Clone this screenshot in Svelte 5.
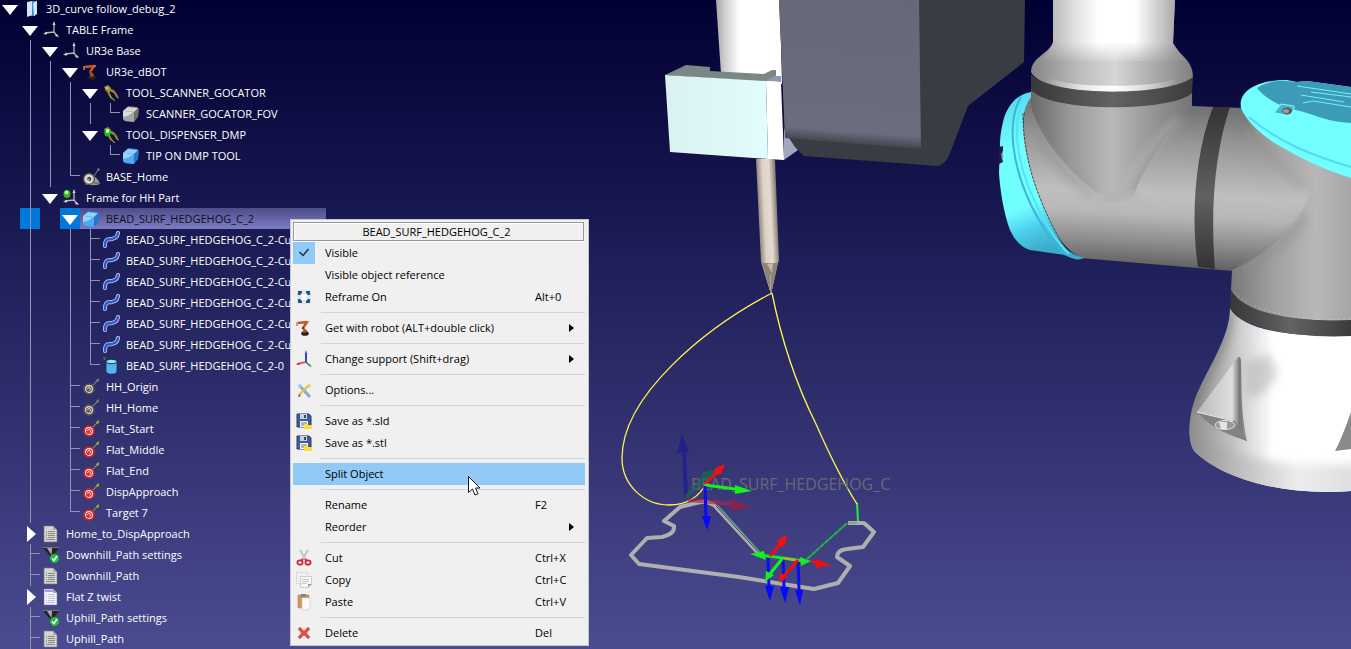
<script>
  // Each character of `cells` fills one 20px guide column:
  // "|" line, "T" branch, "L" last branch, "v" open node, ">" closed node.
  const curve = { cells: ' | |T', icon: 'curve', text: 'BEAD_SURF_HEDGEHOG_C_2-Curve' };
  let rows = [
    { cells: 'v', icon: 'station', text: '3D_curve follow_debug_2' },
    { cells: ' v', icon: 'frame', text: 'TABLE Frame' },
    { cells: ' |v', icon: 'frame', text: 'UR3e Base' },
    { cells: ' ||v', icon: 'robot', text: 'UR3e_dBOT' },
    { cells: ' |||v', icon: 'tool', text: 'TOOL_SCANNER_GOCATOR' },
    { cells: ' ||||L', icon: 'graycube', text: 'SCANNER_GOCATOR_FOV' },
    { cells: ' |||v', icon: 'activetool', text: 'TOOL_DISPENSER_DMP' },
    { cells: ' ||| L', icon: 'cube', text: 'TIP ON DMP TOOL' },
    { cells: ' ||L', icon: 'snail', text: 'BASE_Home' },
    { cells: ' |v', icon: 'activeframe', text: 'Frame for HH Part' },
    { cells: ' | v', icon: 'cube', text: 'BEAD_SURF_HEDGEHOG_C_2', selected: true },
    curve, curve, curve, curve, curve, curve,
    { cells: ' | |L', icon: 'cylinder', text: 'BEAD_SURF_HEDGEHOG_C_2-0' },
    { cells: ' | T', icon: 'graytarget', text: 'HH_Origin' },
    { cells: ' | T', icon: 'graytarget', text: 'HH_Home' },
    { cells: ' | T', icon: 'target', text: 'Flat_Start' },
    { cells: ' | T', icon: 'target', text: 'Flat_Middle' },
    { cells: ' | T', icon: 'target', text: 'Flat_End' },
    { cells: ' | T', icon: 'target', text: 'DispApproach' },
    { cells: ' | L', icon: 'target', text: 'Target 7' },
    { cells: ' >', icon: 'program', text: 'Home_to_DispApproach' },
    { cells: ' T', icon: 'settings', text: 'Downhill_Path settings' },
    { cells: ' T', icon: 'program', text: 'Downhill_Path' },
    { cells: ' >', icon: 'script', text: 'Flat Z twist' },
    { cells: ' T', icon: 'settings', text: 'Uphill_Path settings' },
    { cells: ' T', icon: 'program', text: 'Uphill_Path' }
  ];

  let menu = [
    { text: 'Visible', icon: 'check', checked: true },
    { text: 'Visible object reference' },
    { text: 'Reframe On', icon: 'reframe', key: 'Alt+0' },
    null,
    { text: 'Get with robot (ALT+double click)', icon: 'robot', sub: true },
    null,
    { text: 'Change support (Shift+drag)', icon: 'axes', sub: true },
    null,
    { text: 'Options...', icon: 'options' },
    null,
    { text: 'Save as *.sld', icon: 'save' },
    { text: 'Save as *.stl', icon: 'save' },
    null,
    { text: 'Split Object', active: true },
    null,
    { text: 'Rename', key: 'F2' },
    { text: 'Reorder', sub: true },
    null,
    { text: 'Cut', icon: 'cut', key: 'Ctrl+X' },
    { text: 'Copy', icon: 'copy', key: 'Ctrl+C' },
    { text: 'Paste', icon: 'paste', key: 'Ctrl+V' },
    null,
    { text: 'Delete', icon: 'delete', key: 'Del' }
  ];
</script>

{#snippet icon(name)}
  <svg class="icon" viewBox="0 0 18 18" width="18" height="18" aria-hidden="true">
    {#if name === 'station'}
      <path d="M5 3h8v13H5z" fill="#3f8fd8" /><path d="M5 2l5-1v14l-5 2z" fill="#d3e6f5" />
      <path d="M10 1h5v13l-5 2z" fill="#3d8ad5" /><path d="M11 3l4-2v13l-3 2z" fill="#cfe8fb" />
    {:else if name === 'frame' || name === 'activeframe'}
      <g stroke="#b9b9b0" stroke-width="1.3" fill="none"><path d="M12 11V3M12 11l-9 1M12 11l3 4" /></g>
      <path d="M12 0l1.500 4h-3zM1 13l4-2.500v3zM17 16l-4-1 2-2z" fill="#d5d5cc" />
      {#if name === 'activeframe'}<ellipse cx="5" cy="5" rx="3.500" ry="4" fill="#35b516" /><circle cx="4.500" cy="3.500" r="2" fill="#b6f79e" />{/if}
    {:else if name === 'robot'}
      <path d="M3 4l9-1-4 6 3 4" fill="none" stroke="#c4572a" stroke-width="2.500" stroke-linejoin="round" />
      <path d="M2 3v4M13 2v2" stroke="#d8804d" stroke-width="1.500" />
      <ellipse cx="10" cy="14.500" rx="3.800" ry="2.300" fill="#29201f" /><path d="M8 13l4-1" stroke="#a7441e" stroke-width="2" />
      <circle cx="8" cy="9" r="1" fill="#60301e" />
    {:else if name === 'tool' || name === 'activetool'}
      <path d="M3 5l4-1 5 2 3 4 2 5-3-2-2-4-4-2-1 1 2 4 4 5-5-3-3-6z" fill="#8a7b20" stroke="#4d4614" stroke-width=".5" />
      <path d="M8 6l5 3 3 5M6 7l3 6 4 4" fill="none" stroke="#ada23c" stroke-width="1" />
      <path d="M2 3l4-2 3 3-1 4-4-1z" fill="#9c9034" /><path d="M4 3h2l1 2H4z" fill="#c8bf62" />
      {#if name === 'activetool'}<ellipse cx="5.500" cy="6.500" rx="3.200" ry="4" fill="#28bb18" /><ellipse cx="5.500" cy="5" rx="1.800" ry="2" fill="#d9ffcf" />{/if}
    {:else if name === 'cube' || name === 'graycube'}
      {@const blue = name === 'cube'}
      <path d="M1 6l5-5 9 1 2 2-1 8-4 5-9-1-2-2z" fill={blue ? '#2775c8' : '#6f6f6f'} />
      <path d="M1 6l5-4 10 1-4 4z" fill={blue ? '#8fd2ff' : '#d6d6d6'} />
      <path d="M1 6l11 1v10l-9-1-2-2z" fill={blue ? '#50a9f5' : '#a6a6a6'} />
      <path d="M1 6l10 1q-3 4-10 5z" fill={blue ? '#b4e0ff' : '#eee'} opacity=".75" />
    {:else if name === 'snail'}
      <path d="M3 16c2 1 10 2 15 0-1-4-4-7-7-8z" fill="#9a9a94" />
      <circle cx="7" cy="11" r="5.500" fill="#a5a5a0" stroke="#55554f" />
      <circle cx="7" cy="11" r="3.200" fill="none" stroke="#e8e8e2" stroke-width="1.400" />
      <path d="M6 11a1.300 1.300 0 1 1 1.300 1.300" fill="none" stroke="#333" stroke-width="1.200" /><path d="M11 14q3 2 6 1" stroke="#555" fill="none" />
      <path d="M12 8l4-6" stroke="#898980" /><circle cx="16.500" cy="1.500" r="1.300" fill="#777" />
    {:else if name === 'curve'}
      <path d="M3 15c0-9 4-6 7-7s5-1 6-6" fill="none" stroke="#c3d2f8" stroke-width="4" stroke-linecap="round" />
      <path d="M3 15c0-9 4-6 7-7s5-1 6-6" fill="none" stroke="#3156c8" stroke-width="2.400" stroke-linecap="round" />
    {:else if name === 'cylinder'}
      <path d="M4 4v11c2 3 9 3 11 0V4z" fill="#53b2ef" stroke="#12304c" stroke-width=".8" />
      <ellipse cx="9.500" cy="4.500" rx="5.500" ry="2.200" fill="#9bdcff" stroke="#12304c" /><path d="M1 1h3M2.500 0v3" stroke="#238b35" />
    {:else if name === 'target' || name === 'graytarget'}
      {@const red = name === 'target'}
      <path d="M8 10l8-8" stroke={red ? '#7d872c' : '#77776e'} stroke-width="1.200" /><path d="M14 2l3-2v3l-2 1z" fill={red ? '#9caf20' : '#78786a'} />
      <circle cx="7" cy="11" r="5.800" fill={red ? '#cf2529' : '#55544f'} />
      <circle cx="7" cy="11" r="3.400" fill="none" stroke="#f0dcd9" stroke-width="1.100" />
      <path d="M5.500 11a1.500 1.500 0 1 1 2 1.500" fill="none" stroke="#f5e5e2" stroke-width="1" />
    {:else if name === 'program' || name === 'script'}
      <path d="M2 1h9l4 4v12H2z" fill={name === 'program' ? '#d5d5d0' : '#f4f3ff'} stroke="#77777d" stroke-width=".6" />
      <path d="M11 1v4h4" fill="#aaa" /><path d="M4 6.500h1M6 6.500h7M4 8.500h1M6 8.500h7M4 10.500h1M6 10.500h7M4 12.500h1M6 12.500h7M4 14.500h9" stroke={name === 'program' ? '#8a8a8a' : '#c4c2d6'} />
      {#if name === 'script'}<path d="M3 2h8v2H3z" fill="#a79bea" />{/if}
    {:else if name === 'settings'}
      <path d="M1 2h16l-6 8v6H8v-6z" fill="#252525" /><path d="M5 2h5l-.5 7z" fill="#aaa" /><path d="M1 1.500h16" stroke="#777" />
      <circle cx="12.500" cy="12.500" r="4.600" fill="#18c437" /><path d="M10 12.500l2 2 3-4.500" fill="none" stroke="#fff" stroke-width="1.700" />
    {:else if name === 'check'}
      <path d="M4.500 8l3.500 3.500 5.500-6.500" fill="none" stroke="#1c3449" stroke-width="1.500" />
    {:else if name === 'reframe'}
      <rect x="2" y="2" width="14" height="14" rx="1" fill="#dce4ec" /><path d="M6 6h6v6H6z" fill="#fafafa" />
      <path d="M3 3h4v2L5 7H3zM11 3h4v4h-2l-2-2zM3 11h2l2 2v2H3zM13 11h2v4h-4v-2z" fill="#24548c" />
    {:else if name === 'axes'}
      <path d="M11 12V3" stroke="#3544cf" stroke-width="2" /><path d="M11 12l-9 2" stroke="#d63d4e" stroke-width="1.700" /><path d="M11 12l4 4" stroke="#369260" stroke-width="1.700" />
      <path d="M9.500 4L11 0l1.500 4z" fill="#4b60e3" /><path d="M1 15l4-3v3z" fill="#de4050" /><path d="M17 17l-4-1 2-2z" fill="#4eae77" />
    {:else if name === 'options'}
      <path d="M4 4l11 12" stroke="#86add5" stroke-width="3" /><path d="M3 5l2-2 2 2-2 3z" fill="#a2c8e5" />
      <path d="M4 14l9-9" stroke="#e2c247" stroke-width="2.400" /><path d="M12 4l2-1 2 2-2 2z" fill="#eccb45" /><path d="M3 16l1-3 2 2z" fill="#66543d" />
    {:else if name === 'save'}
      <path d="M2 2h12l2 2v11H2z" fill="#3e5f95" stroke="#243d63" /><path d="M5 2h7v5H5z" fill="#c6d0e0" /><path d="M9 3h2v3H9z" fill="#34496d" />
      <path d="M5 9h8v6H5z" fill="#f4f4f0" /><path d="M6 11h6M6 13h4" stroke="#777" /><path d="M9 12h3l1 1h4v4H9z" fill="#ffdc3e" />
    {:else if name === 'cut'}
      <path d="M5 1l6 10M13 1L7 11" stroke="#c4c4c4" stroke-width="2" /><path d="M8 10l-2 2M10 10l2 2" stroke="#ce3139" stroke-width="2" />
      <ellipse cx="5" cy="13.500" rx="2.600" ry="2.200" fill="none" stroke="#cf2832" stroke-width="1.800" /><ellipse cx="13" cy="13.500" rx="2.600" ry="2.200" fill="none" stroke="#cf2832" stroke-width="1.800" />
    {:else if name === 'copy'}
      <path d="M1.500 1.500h11v11h-11z" fill="#f0f0f0" stroke="#dadada" /><path d="M5.500 5.500h11v8l-3 3h-8z" fill="#f8f8f8" stroke="#cacaca" />
      <path d="M7 8.500h7M7 10.500h7M7 12.500h5" stroke="#c8c8c8" /><path d="M13 16v-3h4z" fill="#999" />
    {:else if name === 'paste'}
      <path d="M3 2h11v13H3z" fill="#cc955b" stroke="#ae7d4e" stroke-width=".5" /><path d="M6 1h5v3H6z" fill="#858585" /><path d="M7 5h8v9l-2 3H7z" fill="#fafafa" stroke="#c8c8c8" stroke-width=".7" />
    {:else if name === 'delete'}
      <path d="M3 5l2-2 4 4 4-4 2 2-3.500 4 3.500 4-2 2-4-4-4 4-2-2 3.500-4z" fill="#de4d50" stroke="#d36b6e" stroke-width=".8" />
    {/if}
  </svg>
{/snippet}

<main>
  <svg class="scene" viewBox="0 0 1351 649" preserveAspectRatio="xMidYMid slice" role="img" aria-label="Robot cell">
    <defs>
      <linearGradient id="tube"><stop offset="0" stop-color="#aaa5a5" /><stop offset=".14" stop-color="#d2d0d0" /><stop offset=".36" stop-color="#fff" /></linearGradient>
      <linearGradient id="face" gradientUnits="userSpaceOnUse" x1="850" y1="0" x2="839" y2="147"><stop offset="0" stop-color="#656878" /><stop offset=".89" stop-color="#6a6d7d" /><stop offset=".99" stop-color="#393c43" /></linearGradient>
      <linearGradient id="clamp"><stop offset="0" stop-color="#d9f1f1" /><stop offset="1" stop-color="#e2fdfd" /></linearGradient>
      <linearGradient id="needle" gradientUnits="userSpaceOnUse" x1="757" y1="210" x2="778" y2="209"><stop offset="0" stop-color="#7d746c" /><stop offset=".35" stop-color="#dfd3c8" /><stop offset=".65" stop-color="#e5dacf" /><stop offset="1" stop-color="#736b64" /></linearGradient>
      <linearGradient id="arm"><stop offset="0" stop-color="#a3a3a3" /><stop offset=".25" stop-color="#e2e2e2" /><stop offset=".4" stop-color="#fff" /><stop offset=".65" stop-color="#fff" /><stop offset="1" stop-color="#909090" /></linearGradient>
      <linearGradient id="fade" gradientUnits="userSpaceOnUse" x1="0" y1="42" x2="0" y2="64"><stop offset="0" stop-color="#fff" /><stop offset="1" stop-color="#000" /></linearGradient>
      <mask id="armfade"><path d="M1000 0h220v90h-220z" fill="url(#fade)" /></mask>
      <linearGradient id="collar"><stop offset="0" stop-color="#848484" /><stop offset=".3" stop-color="#bdbdbd" /><stop offset=".52" stop-color="#d6d6d6" /><stop offset="1" stop-color="#808080" /></linearGradient>
      <linearGradient id="rim"><stop offset="0" stop-color="#fff" stop-opacity="0" /><stop offset=".5" stop-color="#fff" /><stop offset="1" stop-color="#fff" stop-opacity="0" /></linearGradient>
      <linearGradient id="dark"><stop offset="0" stop-color="#373737" /><stop offset=".5" stop-color="#636363" /><stop offset="1" stop-color="#3b3b3b" /></linearGradient>
      <linearGradient id="darkv" x2="0" y2="1"><stop offset="0" stop-color="#333" /><stop offset=".55" stop-color="#616161" /><stop offset="1" stop-color="#333" /></linearGradient>
      <linearGradient id="joint" gradientUnits="userSpaceOnUse" x1="1120" y1="100" x2="1112" y2="266"><stop offset="0" stop-color="#6e6e6e" /><stop offset=".25" stop-color="#989898" /><stop offset=".55" stop-color="#bfbfbf" /><stop offset=".68" stop-color="#b7b7b7" /><stop offset=".85" stop-color="#8b8b8b" /><stop offset="1" stop-color="#5f5f5f" /></linearGradient>
      <linearGradient id="neck"><stop offset="0" stop-color="#686868" /><stop offset=".25" stop-color="#999" /><stop offset=".5" stop-color="#b9b9b9" /><stop offset="1" stop-color="#747474" /></linearGradient>
      <linearGradient id="elbow" gradientUnits="userSpaceOnUse" x1="1232" y1="0" x2="1351" y2="0"><stop offset="0" stop-color="#7a7a7a" /><stop offset=".35" stop-color="#a0a0a0" /><stop offset=".7" stop-color="#b8b8b8" /><stop offset="1" stop-color="#a6a6a6" /></linearGradient>
      <linearGradient id="base"><stop offset="0" stop-color="#8c8c8c" /><stop offset=".25" stop-color="#bebebe" /><stop offset=".52" stop-color="#fff" /><stop offset="1" stop-color="#fff" /></linearGradient>
      <linearGradient id="foot"><stop offset="0" stop-color="#858585" /><stop offset=".3" stop-color="#b9b9b9" /><stop offset=".65" stop-color="#ededed" /><stop offset="1" stop-color="#dcdcdc" /></linearGradient>
      <linearGradient id="cyan" x2=".2" y2="1"><stop offset="0" stop-color="#4fd5ee" /><stop offset=".35" stop-color="#70ffff" /><stop offset=".72" stop-color="#70ffff" /><stop offset=".86" stop-color="#4ccdec" /><stop offset="1" stop-color="#3badca" /></linearGradient>
      <linearGradient id="fin"><stop offset="0" stop-color="#bababa" /><stop offset=".7" stop-color="#dedede" /><stop offset=".85" stop-color="#777" /><stop offset="1" stop-color="#999" /></linearGradient>
      <filter id="soft" x="-40%" y="-40%" width="180%" height="180%"><feGaussianBlur stdDeviation="5" /></filter>
      <clipPath id="baseclip"><path d="M1230 308c0 31-23 60-35 91-8 22-7 45 0 53 29 28 91 44 156 39V335c-60 3-109-5-121-27z" /></clipPath>
    </defs>

    <!-- dispenser and scanner -->
    <path d="M716 0h64l2 84-61-10z" fill="url(#tube)" />
    <path d="M784 128l14 22-14 10z" fill="#a3a6bd" />
    <path d="M779 0h246l-1 62-56 44-18 47q-4 11-12 13l-134-10-9-9-10-15z" fill="#393c43" />
    <path d="M779 0h140l2 149-136-11z" fill="url(#face)" />
    <path d="M665 75l21-10 24 2v4l54 3 8-4h4v6l-10 6z" fill="#7b8786" />
    <path d="M665 75l101 6 2 78-98-7z" fill="url(#clamp)" />
    <path d="M766 81l8-5h7v6z" fill="#9294b2" />
    <path d="M766 81l15 1 3 78-16-1z" fill="#fff" />
    <path d="M756 159h19l4 101-2 7-6 27-10-32z" fill="url(#needle)" />
    <path d="M762 263h16l-7 31z" fill="#8e8277" /><path d="M767 264l5 9 1-10z" fill="#c5b8ac" /><path d="M771 274l-1 16" stroke="#b8aba0" />

    <!-- arm -->
    <path d="M1023 137Q1022 112 1031 92h161v14l50 2 109 55v158c-55 2-100-5-119-31l1-19-153-13C1052 240 1026 190 1023 137z" fill="url(#joint)" />
    <path d="M1031 86h161v20c-24 26-46 56-58 88-10 6-26 6-36 0C1070 172 1040 140 1031 106z" fill="url(#neck)" />
    <path d="M1098 196c14 5 26 3 36-4" fill="none" stroke="#b4b4b4" stroke-width="12" filter="url(#soft)" />
    <path d="M1034 124c12 30 32 54 58 70" fill="none" stroke="#8f8f8f" stroke-width="7" opacity=".6" filter="url(#soft)" />
    <path d="M1180 118c-24 20-42 44-58 72" fill="none" stroke="#bfbfbf" stroke-width="6" opacity=".6" filter="url(#soft)" />
    <path d="M1246 118c20 36 46 56 64 72-6 30-34 60-78 80l-1 20c14 26 70 32 120 31V168z" fill="url(#elbow)" />
    <path d="M1250 128c14 24 30 42 54 58" fill="none" stroke="#9a9a9a" stroke-width="6" opacity=".5" filter="url(#soft)" />
    <path d="M1306 216c-14 22-38 42-64 52" fill="none" stroke="#8b8b8b" stroke-width="8" opacity=".5" filter="url(#soft)" />
    <path d="M1213 107h17c-15 44-20 103-15 162l-17-2c-7-45-4-112 15-160z" fill="url(#darkv)" />
    <path d="M1053 0h122l-2 43c5 12 20 16 20 34-15 19-150 22-162-5 0-15 18-18 22-30z" fill="url(#collar)" />
    <path d="M1053 0h122l-2 43q6 10 14 18h-148q10-8 14-18z" fill="url(#arm)" mask="url(#armfade)" />
    <path d="M1044 80c30 11 104 12 134 1" fill="none" stroke="url(#rim)" stroke-width="6" />
    <path d="M1031 74c18 23 138 23 162 3l-1 16c-20 19-141 20-161-3z" fill="url(#dark)" />

    <path d="M1031 92C1016 94 1006 108 1003 122C1000 135 1000 141 1000 147L999 173C1000 190 1004 214 1010 230C1015 241 1022 248 1030 250L1065 255Q1077 262 1084 258C1072 255 1065 249 1060 240C1042 207 1023 165 1023 120Q1025 105 1031 97z" fill="url(#cyan)" />
    <path d="M1021 97C1006 122 1012 166 1032 207Q1050 242 1066 255" fill="none" stroke="#3fb4d4" stroke-width="2" />
    <path d="M1025 97C1011 122 1016 162 1035 202Q1052 238 1069 254" fill="none" stroke="#55e3f5" stroke-width="2" />
    <path d="M1023 113C1023 165 1042 207 1060 240" fill="none" stroke="#4a4a4a" stroke-width="1" stroke-dasharray="3 1" />
    <path d="M999 147l4-1v4l-1 8 1 4-4 2z" fill="#1a1a50" /><path d="M1001 154l2-3v6l-1 3z" fill="#988c8a" />

    <path d="M1241 108C1238 92 1255 80 1287 80L1297 82 1307 81 1351 87V178C1320 168 1300 158 1273 142C1258 132 1246 120 1241 108z" fill="#72ffff" />
    <path d="M1257 88C1270 79 1285 80 1295 82L1307 81 1351 87V123C1320 121 1312 112 1290 109Q1266 100 1257 88z" fill="#3c9cb7" />
    <path d="M1249 117c29 25 64 39 102 50" fill="none" stroke="#55d8ee" stroke-width="2" />
    <path d="M1297 86l54 8M1311 92l40 5M1301 95l43 7M1303 103l10-2 38 6" stroke="#75effa" stroke-width="1" fill="none" />
    <path d="M1274 113l7-9 13 2v4l-6 5z" fill="#45b5d2" stroke="#87ffff" stroke-width="1" /><ellipse cx="1287" cy="111" rx="5" ry="3.500" fill="#5d5856" /><ellipse cx="1286" cy="111" rx="3" ry="2" fill="#a59b98" />

    <path d="M1230 308c0 31-23 60-35 91-8 22-7 45 0 53 29 28 91 44 156 39V335c-60 3-109-5-121-27z" fill="url(#base)" />
    <g clip-path="url(#baseclip)">
      <path d="M1228 310c-2 46-26 60-36 100" fill="none" stroke="#6f6f6f" stroke-width="10" opacity=".6" filter="url(#soft)" />
      <path d="M1246 362l24-8 8 22-16 18-14 4z" fill="#aaa" opacity=".5" filter="url(#soft)" />
      <path d="M1180 424c40 34 100 44 180 40v40h-180z" fill="url(#foot)" filter="url(#soft)" />
    </g>
    <path d="M1231 290c9 21 59 33 120 30v16c-62 3-113-10-121-28z" fill="url(#dark)" />
    <path d="M1234 292c16 19 66 30 117 27" fill="none" stroke="#ddd" stroke-width="1" stroke-dasharray="2 3" opacity=".4" />
    <path d="M1238 357l-41 55q25 18 50 29c-7-33-5-57-6-81q-1-4-3-3z" fill="url(#fin)" />
    <path d="M1197 412l38 9 12 20c-25-8-37-15-50-29z" fill="#828282" /><path d="M1197 412l36 9" stroke="#eee" />
    <ellipse cx="1225" cy="425" rx="10" ry="4.500" fill="#9a9a9a" stroke="#e2e2e2" /><path d="M1219 422h8v7h-6z" fill="#e5e5e5" />
    <path d="M1351 412q-9 26-16 39l16-2z" fill="#8a8a8a" />

    <!-- part outline and tool paths -->
    <path d="M760 555l-46-50q-7-5-18-2l-16 4-16 14 10 5q1 8-12 11l-15 1-16 17 8 9 100 13 75 12 24-6 12-17-13-9q0-7 10-8l16-2 11-15-10-9h-16" fill="none" stroke="#afafaf" stroke-width="4" stroke-linejoin="round" />
    <path d="M761 555l-45-49" stroke="#40405e" stroke-width="1" />
    <path d="M760 552l-42-47M808 558l40-35h9" fill="none" stroke="#35a96b" stroke-width="1" />
    <path d="M807 559l40-36" stroke="#20b53c" stroke-width="2" stroke-dasharray="5 1" />
    <path d="M857 503l1 18" stroke="#22f03f" stroke-width="2" />
    <path d="M772 293c-67 35-150 103-150 165 0 27 22 47 47 47 18 0 31-9 38-23M772 293c10 50 25 93 44 131 11 25 25 55 41 80" fill="none" stroke="#fff64a" stroke-width="1.300" />
    <text x="691" y="490" class="label">BEAD_SURF_HEDGEHOG_C</text>
    <g opacity=".65">
      <path d="M684 452l2 45" stroke="#191997" stroke-width="4" /><path d="M677 453l5-19 7 18z" fill="#181893" />
      <path d="M686 497l21-21" stroke="#126b47" stroke-width="4" /><path d="M700 481l3-9 15-3-8 12z" fill="#117344" />
      <path d="M688 500l46 4" stroke="#aa2845" stroke-width="4" /><path d="M731 499l21 8-21 4z" fill="#ad1836" />
    </g>
    <path d="M705 484l13-13" stroke="#f20d12" stroke-width="3" /><path d="M715 468l10-4-4 10-6 1z" fill="#f01010" />
    <path d="M705 485l30 4" stroke="#15f019" stroke-width="3" /><path d="M735 485l17 6-17 3z" fill="#13f21a" />
    <path d="M705 486l1 32M768 558l1 30M783 558l1 30M798 560l1 30" stroke="#080eee" stroke-width="3" />
    <path d="M702 516h9l-4 14zM765 586h9l-4 15zM780 587h9l-4 16zM795 590h8l-3 15z" fill="#0509ff" />
    <path d="M760 555l45 6" stroke="#18e729" stroke-width="3" /><path d="M783 558l16 3" stroke="#c8b020" stroke-width="2" />
    <path d="M770 556l11-13M798 560l-15 17" stroke="#f40c0c" stroke-width="3" />
    <path d="M777 540l10-5-2 10-5 2zM781 573l6 4-7 6-1-7z" fill="#f31010" />
    <path d="M782 559l-13 16" stroke="#17f11d" stroke-width="3" /><path d="M766 571l8 4-9 7zM750 554l14-3 2 9zM800 557l11 4-10 5z" fill="#15ee1f" />
    <path d="M811 562h6" stroke="#f20d12" stroke-width="3" /><path d="M816 559l15 6-15 3z" fill="#f01010" />
  </svg>

  <div class="tree" role="tree" aria-label="Station">
    {#each rows as row}
      <div class="row" class:selected={row.selected} role="treeitem" tabindex="-1" aria-selected={!!row.selected}>
        {#each row.cells as cell}
          {#if cell === 'v' || cell === '>'}
            <button class="cell toggle" aria-label={row.text}>
              {#if cell === 'v'}
                <svg width="16" height="16" viewBox="0 0 16 16"><path d="M0 4h16l-8 10z" fill="#fff" /></svg>
              {:else}
                <svg width="16" height="16" viewBox="0 0 16 16"><path d="M5 0v16l9-8z" fill="#fff" /></svg>
              {/if}
            </button>
          {:else}
            <span class="cell" class:line={cell === '|' || cell === 'T'} class:last={cell === 'L'} class:branch={cell === 'T' || cell === 'L'}></span>
          {/if}
        {/each}
        <span class="item">{@render icon(row.icon)}<span>{row.text}</span></span>
      </div>
    {/each}
  </div>

  <div class="menu" role="menu" aria-label="BEAD_SURF_HEDGEHOG_C_2">
    <div class="title">BEAD_SURF_HEDGEHOG_C_2</div>
    {#each menu as entry}
      {#if entry}
        <button class="entry" class:active={entry.active} role="menuitem">
          <span class="slot" class:checked={entry.checked}>{#if entry.icon}{@render icon(entry.icon)}{/if}</span>
          <span class="name">{entry.text}</span>
          <span class="key">{entry.key ?? ''}</span>
          <span class="arrow">{#if entry.sub}<svg width="5" height="8" viewBox="0 0 5 8" aria-hidden="true"><path d="M0 0v8l5-4z" fill="#000" /></svg>{/if}</span>
        </button>
      {:else}
        <hr />
      {/if}
    {/each}
  </div>

  <svg class="cursor" width="13" height="20" viewBox="0 0 13 20" aria-hidden="true">
    <path d="M.5.5v16l4-3.500 2.500 6 3-1.200-2.500-5.800H12z" fill="#fff" stroke="#16161e" />
  </svg>
</main>

<style>
  :global(body) { margin: 0; }
  main {
    position: relative;
    display: grid;
    height: 100vh;
    overflow: hidden;
    background: linear-gradient(#000032, #4b4b91);
    font: 11px/21px "Open Sans", "Noto Sans", sans-serif;
    cursor: default;
  }
  .scene, .tree { grid-area: 1 / 1; min-height: 0; }
  .scene { width: 100%; height: 100%; }
  .label { font-size: 16px; fill: #686875; }
  .tree { z-index: 1; margin-top: -2px; width: 326px; color: #fff; }
  .row { display: flex; height: 21px; }
  .cell { position: relative; flex: none; width: 20px; height: 21px; }
  .line::before, .last::before, .branch::after { content: ""; position: absolute; left: 10px; background: #9293b3; }
  .line::before { top: 0; bottom: 0; width: 1px; }
  .last::before { top: 0; height: 10px; width: 1px; }
  .branch::after { top: 9px; right: 0; height: 1px; }
  button { margin: 0; border: 0; padding: 0; background: none; color: inherit; font: inherit; text-align: left; }
  .toggle { display: grid; place-items: center; }
  .item { display: flex; flex: 1; align-items: center; gap: 6px; padding-left: 2px; white-space: nowrap; }
  .icon { display: block; flex: none; }
  .selected { color: #101018; }
  .selected .cell:nth-child(2), .selected .toggle { background: #0078d7; }
  .selected .item { background: linear-gradient(#4d4d8a, #7c7cc4); }
  .menu {
    position: absolute;
    z-index: 2;
    left: 290px;
    top: 219px;
    box-sizing: border-box;
    width: 299px;
    padding: 2px 3px 1px 2px;
    border: 1px solid #c5c5cc;
    background: #f0f0f0;
    color: #000;
    line-height: 22px;
  }
  .title { height: 17px; margin: 0 1px 1px 0; border: 1px solid #989898; padding-right: 4px; box-shadow: inset 1px 1px #fff, 0 1px #fff; text-align: center; line-height: 17px; }
  .entry { display: flex; align-items: center; width: 100%; height: 22px; box-sizing: border-box; }
  .active, .checked { background: #91c9f7; }
  .slot { display: grid; place-items: center; flex: none; width: 22px; height: 22px; margin-right: 10px; }
  .name { flex: 1; }
  .key { width: 34px; }
  .arrow { display: grid; width: 16px; }
  hr { height: 1px; margin: 4px 0 4px 28px; border: 0; background: #d4d4d4; }
  .cursor { position: absolute; z-index: 3; left: 468px; top: 476px; }
</style>
